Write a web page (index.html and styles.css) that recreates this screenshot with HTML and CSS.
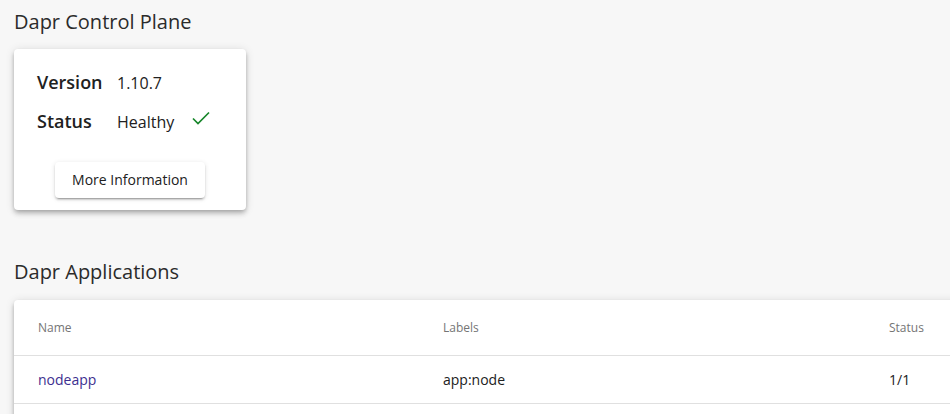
FILE: index.html
```html
<!DOCTYPE html>
<html lang="en">
<head>
  <meta charset="UTF-8" />
  <title>Dapr Dashboard</title>
  <link rel="stylesheet" href="styles.css">
</head>
<body>

  <h2 class="section-title">Dapr Control Plane</h2>
  <div class="card control-card">
    <div class="info-row">
      <span class="info-label">Version</span>
      <span class="info-value">1.10.7</span>
    </div>
    <div class="info-row">
      <span class="info-label">Status</span>
      <span class="info-value">Healthy</span>
      <svg class="check" width="20" height="16" viewBox="0 0 20 16">
        <polyline points="2,8.5 7,13.5 18,2.5" fill="none" stroke="#17862a" stroke-width="1.7" />
      </svg>
    </div>
    <div class="actions">
      <button class="btn">More Information</button>
    </div>
  </div>

  <h2 class="section-title apps-title">Dapr Applications</h2>
  <div class="card apps-table">
    <div class="table-row table-head">
      <div>Name</div>
      <div>Labels</div>
      <div>Status</div>
    </div>
    <div class="table-row">
      <div><a class="app-link" href="#">nodeapp</a></div>
      <div>app:node</div>
      <div>1/1</div>
    </div>
    <div class="table-foot"></div>
  </div>

</body>
</html>
```

FILE: styles.css
```css
* { box-sizing: border-box; }
body {
  margin: 0;
  padding: 8px 14px;
  background: #f7f7f7;
  font-family: 'Open Sans', sans-serif;
  color: #212121;
  overflow: hidden;
}
.section-title {
  margin: 0;
  font-size: 20px;
  font-weight: 400;
  line-height: 28px;
  color: #2b2b2b;
}
.card {
  background: #fff;
  border-radius: 4px;
  box-shadow: 0 2px 4px -1px rgba(0,0,0,0.2), 0 4px 5px 0 rgba(0,0,0,0.14), 0 1px 10px 0 rgba(0,0,0,0.12);
}
.control-card {
  width: 232px;
  margin-top: 13px;
  padding: 21px 23px 12px;
}
.info-row {
  display: flex;
  align-items: baseline;
  height: 24px;
  margin-bottom: 15px;
}
.info-label {
  width: 80px;
  font-size: 18px;
  font-weight: 600;
}
.info-value {
  font-size: 16px;
}
.check {
  margin-left: 17px;
  align-self: center;
  position: relative;
  top: -3px;
}
.actions {
  display: flex;
  justify-content: center;
  margin-top: 29px;
}
.btn {
  height: 36px;
  width: 150px;
  padding-bottom: 2px;
  border: none;
  border-radius: 4px;
  background: #fff;
  font-family: 'Open Sans', sans-serif;
  font-size: 14px;
  color: #212121;
  box-shadow: 0 3px 1px -2px rgba(0,0,0,0.2), 0 2px 2px 0 rgba(0,0,0,0.14), 0 1px 5px 0 rgba(0,0,0,0.12);
  cursor: pointer;
}
.apps-title {
  margin-top: 48px;
}
.apps-table {
  width: 1000px;
  margin-top: 14px;
  border-radius: 4px 0 0 4px;
}
.table-row {
  display: grid;
  grid-template-columns: 405px 446px 1fr;
  align-items: center;
  padding-left: 24px;
  height: 48px;
  border-bottom: 1px solid #e0e0e0;
  font-size: 14px;
}
.table-head {
  height: 56px;
  font-size: 12px;
  color: #757575;
}
.table-foot {
  height: 56px;
}
.app-link {
  color: #3d2f8f;
  text-decoration: none;
}
```
